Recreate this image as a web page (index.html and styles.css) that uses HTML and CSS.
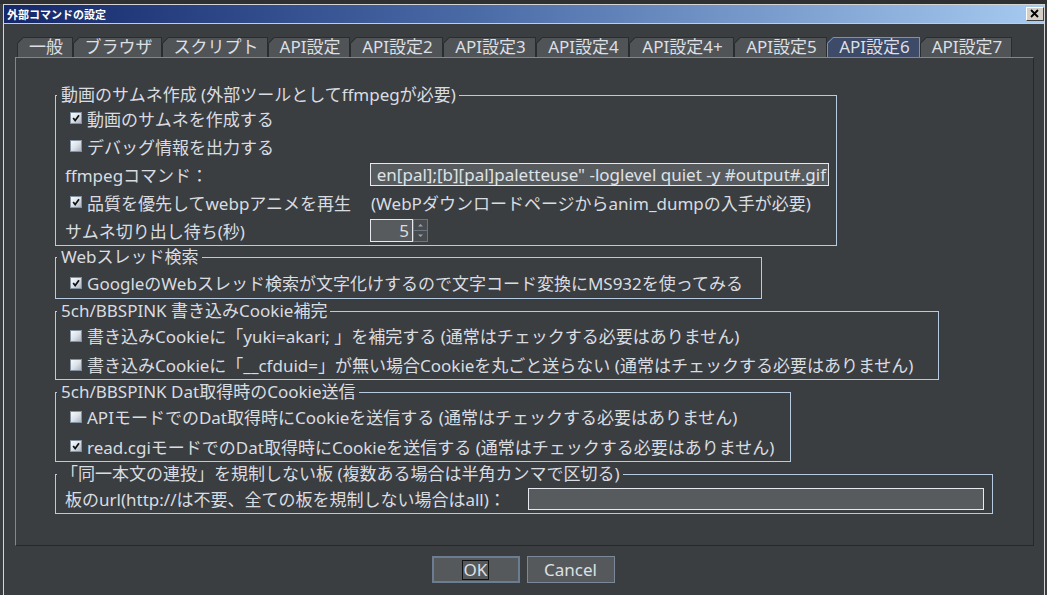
FILE: index.html
```html
<!DOCTYPE html>
<html lang="ja">
<head>
<meta charset="utf-8">
<title>外部コマンドの設定</title>
<link rel="stylesheet" href="styles.css">
</head>
<body>
<div class="desktop"></div>
<div class="window">
  <div class="titlebar">
    <span class="title">外部コマンドの設定</span>
    <span class="close"><svg viewBox="0 0 16 12" width="16" height="12"><path d="M4 2 L11 9 M11 2 L4 9" stroke="#000" stroke-width="1.8" fill="none"/></svg></span>
  </div>
  <div class="body">
    <div class="tabs">
      <div class="tab t1">一般</div>
      <div class="tab t2">ブラウザ</div>
      <div class="tab t3">スクリプト</div>
      <div class="tab t4">API設定</div>
      <div class="tab t5">API設定2</div>
      <div class="tab t6">API設定3</div>
      <div class="tab t7">API設定4</div>
      <div class="tab t8">API設定4+</div>
      <div class="tab t9">API設定5</div>
      <div class="tab t10 active">API設定6</div>
      <div class="tab t11">API設定7</div>
    </div>
    <div class="panel">
      <fieldset class="group g1">
        <legend>動画のサムネ作成 (外部ツールとしてffmpegが必要)</legend>
        <div class="grid">
          <div class="check"><span class="cb on"><svg viewBox="0 0 12 12"><path d="M2.6 6 L5 9 L9.6 2.8" /></svg></span>動画のサムネを作成する</div>
          <div></div>
          <div class="check"><span class="cb"></span>デバッグ情報を出力する</div>
          <div></div>
          <div class="label">ffmpegコマンド：</div>
          <div class="field cmd"><span>en[pal];[b][pal]paletteuse" -loglevel quiet -y #output#.gif</span></div>
          <div class="check"><span class="cb on"><svg viewBox="0 0 12 12"><path d="M2.6 6 L5 9 L9.6 2.8" /></svg></span>品質を優先してwebpアニメを再生</div>
          <div class="note">(WebPダウンロードページからanim_dumpの入手が必要)</div>
          <div class="label">サムネ切り出し待ち(秒)</div>
          <div class="spinner">
            <div class="spin-value">5</div>
            <div class="spin-btns">
              <span class="spin-btn"><svg viewBox="0 0 7 4" width="7" height="4"><path d="M1 3.5 L3.5 1 L6 3.5Z"/></svg></span>
              <span class="spin-btn"><svg viewBox="0 0 7 4" width="7" height="4"><path d="M1 0.5 L3.5 3 L6 0.5Z"/></svg></span>
            </div>
          </div>
        </div>
      </fieldset>

      <fieldset class="group g2">
        <legend>Webスレッド検索</legend>
        <div class="row"><div class="check"><span class="cb on"><svg viewBox="0 0 12 12"><path d="M2.6 6 L5 9 L9.6 2.8" /></svg></span>GoogleのWebスレッド検索が文字化けするので文字コード変換にMS932を使ってみる</div></div>
      </fieldset>

      <fieldset class="group g3">
        <legend>5ch/BBSPINK 書き込みCookie補完</legend>
        <div class="row"><div class="check"><span class="cb"></span>書き込みCookieに「yuki=akari; 」を補完する (通常はチェックする必要はありません)</div></div>
        <div class="row"><div class="check"><span class="cb"></span>書き込みCookieに「__cfduid=」が無い場合Cookieを丸ごと送らない (通常はチェックする必要はありません)</div></div>
      </fieldset>

      <fieldset class="group g4">
        <legend>5ch/BBSPINK Dat取得時のCookie送信</legend>
        <div class="row"><div class="check"><span class="cb"></span>APIモードでのDat取得時にCookieを送信する (通常はチェックする必要はありません)</div></div>
        <div class="row tall"><div class="check"><span class="cb on"><svg viewBox="0 0 12 12"><path d="M2.6 6 L5 9 L9.6 2.8" /></svg></span>read.cgiモードでのDat取得時にCookieを送信する (通常はチェックする必要はありません)</div></div>
      </fieldset>

      <fieldset class="group g5">
        <legend>「同一本文の連投」を規制しない板 (複数ある場合は半角カンマで区切る)</legend>
        <div class="row url-row">
          <div class="label">板のurl(http://は不要、全ての板を規制しない場合はall)：</div>
          <div class="field url"></div>
        </div>
      </fieldset>
    </div>
    <div class="buttons">
      <button class="btn default"><span class="focus">OK</span></button>
      <button class="btn">Cancel</button>
    </div>
  </div>
</div>
</body>
</html>
```

FILE: styles.css
```css
html, body {
  margin: 0;
  padding: 0;
}
body {
  width: 1047px;
  height: 595px;
  overflow: hidden;
  background: #3b3e41;
  font-family: "Noto Sans", "Noto Sans CJK JP", sans-serif;
  font-size: 17px;
  color: #d9dce0;
}

.desktop {
  height: 4px;
  background: #2e3032;
}

.window {
  margin-left: 3px;
  width: 1042px;
  box-sizing: border-box;
  border-left: 1px solid #d4d4d4;
  border-right: 1px solid #d4d4d4;
  border-top: 1px solid #d4d4d4;
  background: #3b3e41;
  height: 591px;
}

.titlebar {
  height: 18px;
  background: linear-gradient(to right, #14286a 0%, #4a6aa6 45%, #a6caf0 100%);
  border-bottom: 1px solid #c8cbd0;
  display: flex;
  align-items: center;
  justify-content: space-between;
  padding-left: 3px;
}
.title {
  color: #fff;
  font-weight: bold;
  font-size: 11px;
  font-family: "Noto Sans CJK JP", sans-serif;
  line-height: 18px;
}
.close {
  width: 16px;
  height: 12px;
  background: #d4d0c8;
  border: 1px solid;
  border-color: #fff #404040 #404040 #fff;
  display: flex;
  align-items: center;
  justify-content: center;
}

.body {
  padding-top: 13px;
}

.tabs {
  display: flex;
  margin-left: 13px;
  height: 20px;
}
.tab {
  position: relative;
  height: 20px;
  box-sizing: border-box;
  padding: 0 0 0 2px;
  background: #505457;
  border: 1px solid #2a2d30;
  border-bottom: none;
  line-height: 18px;
  font-size: 17px;
  color: #dcdfe3;
  white-space: nowrap;
  text-align: center;
  flex: none;
}
.t1 { width: 56px; }
.t2 { width: 89px; }
.t3 { width: 106px; }
.t4 { width: 82px; }
.t5 { width: 93px; }
.t6 { width: 93px; }
.t7 { width: 93px; }
.t8 { width: 105px; }
.t9 { width: 93px; }
.t10 { width: 93px; }
.t11 { width: 92px; }
.tab::after {
  content: "";
  position: absolute;
  left: -1px;
  top: -1px;
  width: 0;
  height: 0;
  border-top: 7px solid #3b3e41;
  border-right: 7px solid transparent;
}
.tab::before {
  content: "";
  position: absolute;
  left: -1px;
  top: 5px;
  width: 9px;
  height: 1px;
  background: #2a2d30;
  transform: rotate(-45deg);
  transform-origin: 0 0;
  z-index: 1;
}
.tab.active {
  background: #3d4a68;
  border-color: #7292c8;
}
.tab.active::before {
  background: #7292c8;
}

.panel {
  margin-left: 11px;
  width: 1019px;
  height: 489px;
  box-sizing: border-box;
  border-top: 1px solid #6a89c2;
  border-left: 1px solid #6a89c2;
  border-right: 1px solid #26292c;
  border-bottom: 1px solid #26292c;
  padding: 27px 0 0 39px;
  display: flex;
  flex-direction: column;
  align-items: flex-start;
}

.group {
  margin: 0;
  padding: 0 7px 0 9px;
  border: 1px solid #b6cbe2;
  box-sizing: border-box;
  min-width: 0;
}
.group legend {
  margin-left: -8px;
  padding: 0 3px 0 4px;
  line-height: 20px;
  height: 20px;
  white-space: nowrap;
}
.g1 { width: 782px; }
.g2 { width: 707px; margin-top: 1px; }
.g3 { width: 884px; margin-top: 2px; }
.g4 { width: 736px; margin-top: 2px; }
.g5 { width: 938px; margin-top: 2px; }

.grid {
  display: grid;
  grid-template-columns: 305px 458px;
  grid-auto-rows: 28px;
  align-items: center;
  margin-top: -1px;
  padding-bottom: 1px;
}

.row {
  height: 29px;
  display: flex;
  align-items: center;
}
.g2 .row { height: 31px; }
.row.tall { height: 30px; }

.check {
  display: flex;
  align-items: center;
  gap: 5px;
  margin-left: 5px;
  white-space: nowrap;
}
.cb {
  width: 12px;
  height: 12px;
  box-sizing: border-box;
  border: 1px solid #8491a0;
  background: linear-gradient(135deg, #f8fafc 0%, #dde3ea 50%, #aab5c2 100%);
  flex: none;
  display: flex;
}
.cb svg {
  width: 10px;
  height: 10px;
}
.cb svg path {
  fill: none;
  stroke: #111;
  stroke-width: 2.1;
}

.label {
  white-space: nowrap;
}
.note {
  white-space: nowrap;
  padding-left: 1px;
}

.field {
  box-sizing: border-box;
  height: 23px;
  border: 1px solid #e6eaf0;
  background: #575b5e;
  color: #dfe2e6;
  white-space: nowrap;
  display: flex;
  align-items: center;
}
.cmd {
  width: 459px;
  justify-content: flex-end;
  padding: 0 2px;
  line-height: 21px;
}
.cmd span {
  flex: none;
}

.spinner {
  display: flex;
  height: 23px;
}
.spin-value {
  box-sizing: border-box;
  width: 43px;
  height: 23px;
  border: 1px solid #e6eaf0;
  background: #575b5e;
  text-align: right;
  padding-right: 3px;
  line-height: 21px;
}
.spin-btns {
  display: flex;
  flex-direction: column;
  width: 15px;
}
.spin-btn {
  flex: 1;
  box-sizing: border-box;
  border: 1px solid #6c7580;
  background: #474b4e;
  display: flex;
  align-items: center;
  justify-content: center;
}
.spin-btn + .spin-btn {
  border-top: none;
}
.spin-btn path {
  fill: #9aa3ad;
}

.url-row .label {
  width: 463px;
}
.url {
  width: 456px;
  height: 22px;
}

.buttons {
  display: flex;
  justify-content: center;
  gap: 7px;
  margin-top: 10px;
  padding-right: 2px;
}
.btn {
  width: 88px;
  height: 27px;
  box-sizing: border-box;
  background: #56595c;
  border: 1px solid #7a8898;
  color: #dde0e4;
  font-family: "Noto Sans", "Noto Sans CJK JP", sans-serif;
  font-size: 17px;
  padding: 0;
  display: flex;
  align-items: center;
  justify-content: center;
}
.btn.default {
  border: 2px solid #6c7d92;
}
.focus {
  border: 1px solid #111;
  padding: 0 1px;
  line-height: 18px;
}
```
